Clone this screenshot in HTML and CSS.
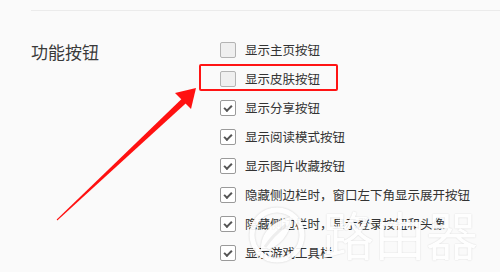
FILE: index.html
```html
<!DOCTYPE html>
<html lang="zh">
<head>
<meta charset="utf-8">
<link rel="stylesheet" href="styles.css">
</head>
<body>
<div class="divider"></div>
<section class="group">
  <div class="group-label">功能按钮</div>
  <ul class="options">
    <li class="opt"><span class="box"></span><span>显示主页按钮</span></li>
    <li class="opt"><span class="box"></span><span>显示皮肤按钮</span></li>
    <li class="opt"><span class="box on"></span><span>显示分享按钮</span></li>
    <li class="opt"><span class="box on"></span><span>显示阅读模式按钮</span></li>
    <li class="opt"><span class="box on"></span><span>显示图片收藏按钮</span></li>
    <li class="opt"><span class="box on"></span><span>隐藏侧边栏时，窗口左下角显示展开按钮</span></li>
    <li class="opt"><span class="box on"></span><span>隐藏侧边栏时，显示登录按钮和头像</span></li>
    <li class="opt"><span class="box on"></span><span>显示游戏工具栏</span></li>
  </ul>
</section>

<div class="highlight"></div>
<svg class="arrow" width="500" height="272" viewBox="0 0 500 272">
  <polygon points="56.7,219.6 183.9,96.8 188.1,101.2 57.3,220.4" fill="#ff1111"/>
  <polygon points="196,88 175,93 191,109" fill="#ff1111"/>
</svg>

<div class="watermark">
  <svg class="wm-logo" width="58" height="60" viewBox="0 0 58 60">
    <circle cx="29" cy="30" r="25" fill="none" stroke="#fff" stroke-width="5"/>
    <path d="M13 46 C12 28 24 16 44 12 C42 30 32 42 15 46 Z" fill="#fff"/>
    <path d="M17 42 C23 33 29 27 38 20" fill="none" stroke="#eeeeee" stroke-width="3"/>
  </svg>
  <span class="wm-text">路由器</span>
</div>
</body>
</html>
```
FILE: styles.css
```css
html, body {
  margin: 0;
  padding: 0;
  background: #fafafa;
  width: 500px;
  height: 272px;
  overflow: hidden;
  font-family: "Noto Sans CJK SC", "Noto Sans", sans-serif;
  color: #333;
}
body { position: relative; padding-top: 10px; box-sizing: border-box; }
.divider {
  margin-left: 31px;
  border-top: 1px solid #ebebeb;
}
.group {
  display: flex;
  margin-top: 24px;
}
.group-label {
  width: 189px;
  margin-left: 31px;
  font-size: 17px;
  line-height: 29px;
  padding-top: 2px;
  color: #3a3a3a;
}
.options {
  list-style: none;
  margin: 0;
  padding: 0;
}
.opt {
  display: flex;
  align-items: center;
  height: 29px;
  font-size: 12.5px;
  gap: 9px;
  white-space: nowrap;
}
.box {
  width: 14px;
  height: 14px;
  border: 1px solid #b3b3b3;
  border-radius: 2px;
  background: #efefef;
  position: relative;
  flex: none;
}
.box.on {
  background: #fff;
  border-color: #9a9a9a;
}
.box.on::after {
  content: "";
  position: absolute;
  left: 4px;
  top: 2px;
  width: 6px;
  height: 3px;
  border-left: 2px solid #555;
  border-bottom: 2px solid #555;
  transform: translate(-1px, 2px) rotate(-45deg);
}
.highlight {
  position: absolute;
  left: 199px;
  top: 64px;
  width: 135px;
  height: 23px;
  border: 2.5px solid #ff1414;
  border-radius: 2px;
}
.arrow {
  position: absolute;
  left: 0;
  top: 0;
}
.watermark {
  position: absolute;
  left: 248px;
  top: 205px;
  display: flex;
  align-items: flex-start;
  gap: 16px;
  opacity: 0.92;
}
.wm-logo {
  filter: drop-shadow(0 0 1px rgba(0,0,0,0.18));
}
.wm-text {
  font-size: 52px;
  line-height: 58px;
  color: #fff;
  text-shadow: 0 0 1.5px rgba(0,0,0,0.2);
}
```
